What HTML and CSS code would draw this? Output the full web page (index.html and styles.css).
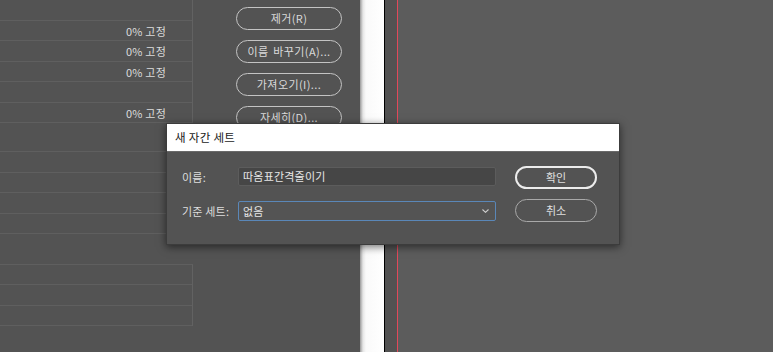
FILE: index.html
```html
<!DOCTYPE html>
<html>
<head>
	<meta charset="utf-8">
	<title>새 자간 세트</title>
	<link rel="stylesheet" href="styles.css">
</head>
<body>
<div class="app">
	<div class="panel">
		<div class="sets">
			<div class="rows">
				<div class="row"></div>
				<div class="row">0% 고정</div>
				<div class="row">0% 고정</div>
				<div class="row">0% 고정</div>
				<div class="row"></div>
				<div class="row">0% 고정</div>
			</div>
			<div class="rows">
				<div class="row tall"></div>
				<div class="row"></div>
				<div class="row"></div>
				<div class="row"></div>
				<div class="row"></div>
			</div>
			<div class="rows box">
				<div class="row"></div>
				<div class="row"></div>
				<div class="row"></div>
			</div>
		</div>
		<div class="actions">
			<span class="pill">제거(R)</span>
			<span class="pill">이름 바꾸기(A)...</span>
			<span class="pill">가져오기(I)...</span>
			<span class="pill">자세히(D)...</span>
		</div>
	</div>
	<div class="strip"></div>
	<div class="gutter"></div>
	<div class="margin-line"></div>
	<div class="canvas"></div>

	<div class="dialog">
		<div class="title">새 자간 세트</div>
		<div class="body">
			<div class="form">
				<div class="field">
					<label>이름:</label>
					<div class="input">따옴표간격줄이기</div>
				</div>
				<div class="field">
					<label>기준 세트:</label>
					<div class="input select">
						<span>없음</span>
						<svg width="7" height="4" viewBox="0 0 7 4"><polyline points="0.5,0.5 3.5,3.3 6.5,0.5" fill="none" stroke="#cfcfcf" stroke-width="1.1"/></svg>
					</div>
				</div>
			</div>
			<div class="buttons">
				<span class="btn primary">확인</span>
				<span class="btn">취소</span>
			</div>
		</div>
	</div>
</div>
</body>
</html>
```

FILE: styles.css
```css
*{
	margin:0;
	padding:0;
	box-sizing:border-box;
}
html,body{
	height:352px;
	overflow:hidden;
}
body{
	font-family:"Noto Sans CJK KR","Noto Sans",sans-serif;
	font-size:11px;
	color:#d6d6d6;
	background:#5b5b5b;
}
.app{
	display:flex;
	height:352px;
	position:relative;
}
.panel{
	width:360px;
	background:#535353;
	display:flex;
	flex:none;
}
.sets{
	width:193px;
}
.rows{
	border-right:1px solid #626262;
}
.row{
	height:20.5px;
	border-bottom:1px solid #5f5f5f;
	text-align:right;
	padding-right:26px;
	line-height:20px;
	color:#dcdcdc;
	letter-spacing:0.2px;
}
.row.tall{
	height:29px;
}
.box{
	margin-top:29.5px;
	border-top:1px solid #5f5f5f;
}
.actions{
	display:flex;
	flex-direction:column;
	gap:10px;
	padding:7px 0 0 43px;
}
.pill{
	width:106px;
	height:23px;
	border:1.5px solid #c4c4c4;
	border-radius:12px;
	text-align:center;
	line-height:20px;
	color:#dadada;
	letter-spacing:0.4px;
	word-spacing:2px;
}
.strip{
	width:25px;
	background:linear-gradient(to right,#9a9a9a 0,#e6e6e6 3px,#fafafa 6px,#ffffff 100%);
	border-right:1px solid #000;
	flex:none;
}
.gutter{
	width:12px;
	background:#525252;
	flex:none;
}
.margin-line{
	width:1px;
	background:#e2485a;
	flex:none;
}
.canvas{
	flex:1;
	background:#5c5c5c;
}
.dialog{
	position:absolute;
	left:166px;
	top:123px;
	width:454px;
	height:122px;
	background:#535353;
	border:1px solid #3c3c3c;
	box-shadow:0 2px 8px rgba(0,0,0,0.55);
}
.title{
	height:28px;
	background:#fff;
	color:#1a1a1a;
	padding-left:8px;
	line-height:26px;
	font-size:11.5px;
	letter-spacing:0.3px;
	border-bottom:1px solid #6a6a6a;
}
.body{
	display:flex;
	padding:14px 0 0 15px;
}
.form{
	display:flex;
	flex-direction:column;
	gap:15px;
	padding-top:1px;
}
.field{
	display:flex;
	align-items:center;
}
.field label{
	width:56px;
	color:#dedede;
	letter-spacing:0.2px;
}
.input{
	width:258px;
	height:19px;
	background:#464646;
	border:1px solid #5c5c5c;
	border-radius:2px;
	padding-left:4px;
	line-height:16px;
	color:#e6e6e6;
	letter-spacing:0.2px;
}
.select{
	height:20px;
	background:#545454;
	border-color:#5a87b8;
	display:flex;
	align-items:center;
	justify-content:space-between;
	padding-right:6px;
}
.buttons{
	display:flex;
	flex-direction:column;
	gap:10px;
	margin-left:19px;
}
.btn{
	width:82px;
	height:23px;
	border:1.5px solid #a9a9a9;
	border-radius:12px;
	text-align:center;
	line-height:20px;
	color:#e0e0e0;
}
.btn.primary{
	border:2px solid #ececec;
	line-height:19px;
}
```
